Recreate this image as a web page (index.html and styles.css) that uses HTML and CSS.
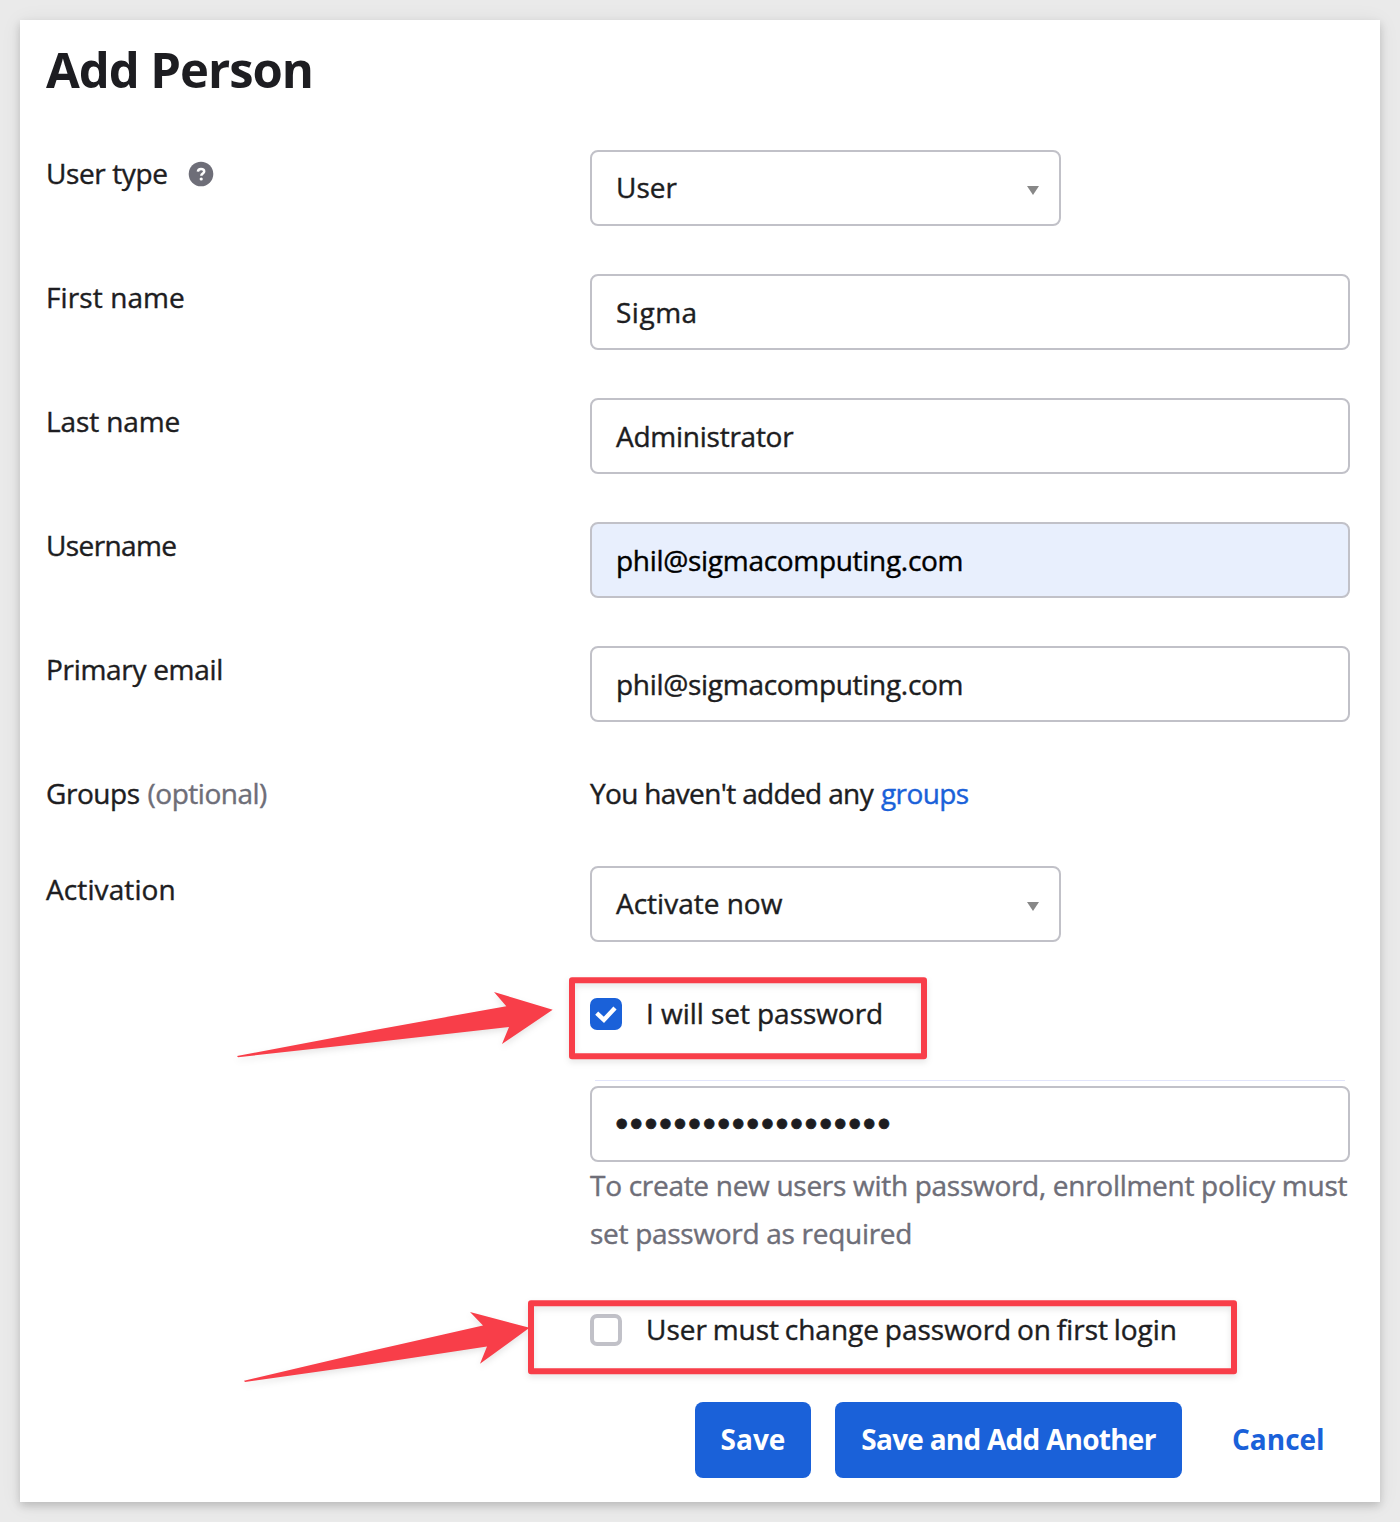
FILE: index.html
```html
<!DOCTYPE html>
<html lang="en">
<head>
<meta charset="utf-8">
<title>Add Person</title>
<link rel="stylesheet" href="styles.css">
</head>
<body>
<main class="card">
  <h1 class="title">Add Person</h1>

  <div class="form">
    <div class="row">
      <div class="label"><span class="t-usertype">User type</span>
        <svg class="help-icon" viewBox="0 0 26 26" aria-hidden="true">
          <circle cx="13" cy="13" r="12.3" fill="#6e6e78"/>
          <path d="M9.900 10.600C10 8.800 11.300 7.900 13 7.900s3.200.9 3.200 2.500c0 2.100-2.900 2.100-2.900 4.300" fill="none" stroke="#fff" stroke-width="2.500"/>
          <circle cx="13.200" cy="18" r="1.600" fill="#fff"/>
        </svg>
      </div>
      <div class="field select"><span>User</span><i class="caret"></i></div>
    </div>
    <div class="row">
      <div class="label t-first">First name</div>
      <div class="field input t-sigma">Sigma</div>
    </div>
    <div class="row">
      <div class="label t-last">Last name</div>
      <div class="field input t-admin">Administrator</div>
    </div>
    <div class="row">
      <div class="label t-username">Username</div>
      <div class="field input autofill t-mail">phil@sigmacomputing.com</div>
    </div>
    <div class="row">
      <div class="label t-primary">Primary email</div>
      <div class="field input t-mail">phil@sigmacomputing.com</div>
    </div>
    <div class="row">
      <div class="label"><span class="t-groups">Groups</span><span class="optional">(optional)</span></div>
      <div class="label"><span class="t-none">You haven't added any</span><a class="link">groups</a></div>
    </div>
    <div class="row">
      <div class="label t-activation">Activation</div>
      <div class="stack">
        <div class="field select"><span>Activate now</span><i class="caret"></i></div>
        <div class="check">
          <span class="box checked"><svg viewBox="0 0 32 32"><path d="M6.700 15.200L13.900 21.800L25 10" fill="none" stroke="#fff" stroke-width="4.400"/></svg></span>
          <span class="check-text">I will set password</span>
        </div>
        <div class="password">
          <div class="divider"></div>
          <div class="field input"><span class="dots">●●●●●●●●●●●●●●●●●●●</span></div>
          <p class="hint">To create new users with password, enrollment policy must set password as required</p>
        </div>
        <div class="check">
          <span class="box"></span>
          <span class="check-text t-must">User must change password on first login</span>
        </div>
      </div>
    </div>
  </div>

  <div class="actions">
    <div class="button save">Save</div>
    <div class="button another">Save and Add Another</div>
    <div class="cancel">Cancel</div>
  </div>
</main>

<svg class="annotations" viewBox="0 0 1400 1522" aria-hidden="true">
  <g fill="none" stroke="#f83e49" stroke-width="6" stroke-linejoin="round">
    <rect x="572" y="980.300" width="352" height="76"/>
    <rect x="531" y="1303.300" width="703" height="68"/>
  </g>
  <g fill="#f83e49">
    <path d="M237 1056Q372 1030 506.300 1006.300L494 992L552.700 1009.700L502 1044L509 1027Q373 1042.500 238 1057.200Z"/>
    <path d="M244 1380.800Q364 1352 483 1325.500L470 1312L529.500 1327.800L480 1363.800L487 1346.500Q366 1365.500 245 1382Z"/>
  </g>
</svg>
</body>
</html>
```
FILE: styles.css
```css
* { box-sizing: border-box; }

body {
  margin: 0;
  padding: 20px;
  background: #eaeaea;
  color: #1d1d21;
  font: 28px/48px "Open Sans", sans-serif;
  position: relative;
  -webkit-text-stroke: 0.4px currentColor;
}

.card {
  height: 1482px;
  padding: 15px 30px 24px 26px;
  background: #fff;
  box-shadow: 0 4px 8px rgba(0, 0, 0, 0.16), 0 2px 20px rgba(0, 0, 0, 0.07);
}

.title {
  margin: 0 0 47px;
  font-size: 49px;
  line-height: 68px;
  font-weight: 700;
  letter-spacing: -1.05px;
  -webkit-text-stroke: 0;
}

.form { display: flex; flex-direction: column; gap: 48px; }
.row { display: grid; grid-template-columns: 544px 760px; align-items: start; }

.label {
  display: flex;
  height: 48px;
  line-height: 46px;
  white-space: nowrap;
}
.help-icon { width: 26px; height: 26px; margin: 11px 0 0 21px; }
.optional { margin-left: 8px; color: #6e6e78; letter-spacing: -0.5px; }
.link { margin-left: 8px; color: #1a61d9; letter-spacing: -0.6px; }

.field {
  height: 76px;
  padding: 0 24px;
  border: 2px solid #c1c1c8;
  border-radius: 8px;
  background: #fff;
  line-height: 72px;
}
.select {
  width: 471px;
  display: flex;
  justify-content: space-between;
  line-height: 70px;
}
.autofill { background: #e8effd; color: #000; }
.caret {
  width: 12px;
  height: 9px;
  margin: 34px -4px 0 0;
  background: #888;
  clip-path: polygon(0 0, 100% 0, 50% 100%);
}

.stack { display: flex; flex-direction: column; gap: 48px; }
.check { display: flex; height: 48px; align-items: center; }
.box {
  width: 32px;
  height: 32px;
  border: 4px solid #c1c1c8;
  border-radius: 7px;
}
.box.checked { border: 0; background: #1a61d9; }
.box svg { display: block; width: 32px; height: 32px; }
.check-text {
  height: 48px;
  margin-left: 24px;
  line-height: 46px;
  letter-spacing: -0.05px;
  white-space: nowrap;
}

.password { margin-top: -6px; }
.divider { height: 1px; margin: 0 5px 5px; background: #e1e4fa; }
.dots {
  display: block;
  font-family: "DejaVu Sans", sans-serif;
  font-size: 13px;
  line-height: 70px;
  letter-spacing: 3.22px;
  -webkit-text-stroke: 0.7px currentColor;
}
.hint {
  margin: -1px -10px 1px 0;
  color: #6e6e78;
  letter-spacing: -0.29px;
}

.actions { display: flex; margin: 48px 0 0 649px; line-height: 74px; font-weight: 700; white-space: nowrap; -webkit-text-stroke: 0; }
.button {
  height: 76px;
  margin-right: 24px;
  border-radius: 8px;
  background: #1a61d9;
  color: #fff;
  text-align: center;
}
.save { width: 116px; }
.another { width: 347px; letter-spacing: -0.75px; }
.cancel { margin-left: 26px; color: #1a61d9; }

/* Per-string tracking */
.t-usertype { letter-spacing: -0.4px; }
.t-first { letter-spacing: 0.1px; }
.t-last { letter-spacing: -0.1px; }
.t-username { letter-spacing: -0.6px; }
.t-primary { letter-spacing: -0.3px; }
.t-groups { letter-spacing: -0.45px; }
.t-none { letter-spacing: -0.65px; }
.t-activation { letter-spacing: 0.1px; }
.t-sigma { letter-spacing: 0.5px; }
.t-admin { letter-spacing: -0.25px; }
.t-mail { letter-spacing: -0.3px; }
.t-must { letter-spacing: 0; word-spacing: -1.55px; }

.annotations {
  position: absolute;
  left: 0;
  top: 0;
  width: 1400px;
  height: 1522px;
  pointer-events: none;
  filter: drop-shadow(0 3px 3px rgba(0, 0, 0, 0.1));
}
```
